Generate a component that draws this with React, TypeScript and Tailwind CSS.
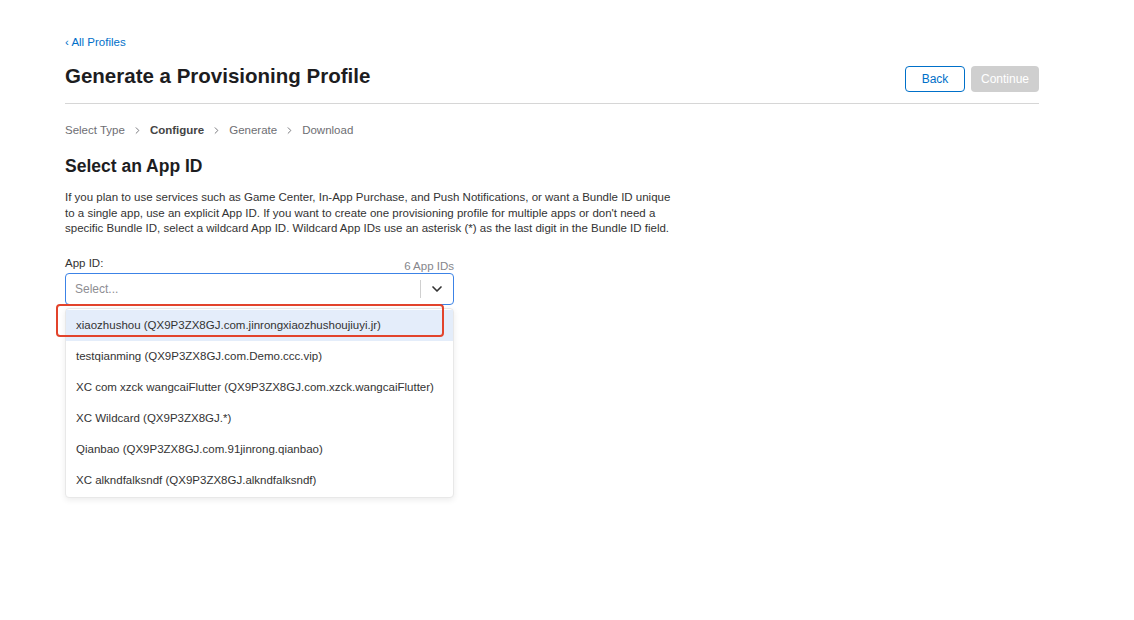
import { ChevronDown, ChevronRight } from "lucide-react";

const appIds = [
  "xiaozhushou (QX9P3ZX8GJ.com.jinrongxiaozhushoujiuyi.jr)",
  "testqianming (QX9P3ZX8GJ.com.Demo.ccc.vip)",
  "XC com xzck wangcaiFlutter (QX9P3ZX8GJ.com.xzck.wangcaiFlutter)",
  "XC Wildcard (QX9P3ZX8GJ.*)",
  "Qianbao (QX9P3ZX8GJ.com.91jinrong.qianbao)",
  "XC alkndfalksndf (QX9P3ZX8GJ.alkndfalksndf)",
];

const steps = ["Select Type", "Configure", "Generate", "Download"];

export default function App() {
  return (
    <div
      className="w-[1134px] h-[620px] overflow-hidden bg-white text-[#1d1d1f]"
      style={{ fontFamily: "'Liberation Sans', Arial, sans-serif" }}
    >
      <div className="w-[974px] ml-[65px]">
        {/* back link */}
        <div className="h-[49px] flex items-end">
          <a href="#" className="text-[11.5px] leading-[13px] text-[#0070c9]">
            ‹ All Profiles
          </a>
        </div>

        {/* header */}
        <div className="flex items-center justify-between h-[55px] border-b border-[#d6d6d6]">
          <h1 className="text-[20.5px] font-bold mt-[1px]">
            Generate a Provisioning Profile
          </h1>
          <div className="flex gap-[6px] mt-[6px]">
            <button className="h-[26px] w-[60px] rounded-[4px] border border-[#0070c9] text-[12px] text-[#0070c9] bg-white">
              Back
            </button>
            <button className="h-[26px] w-[68px] rounded-[4px] bg-[#cfcfcf] text-[12px] text-white">
              Continue
            </button>
          </div>
        </div>

        {/* breadcrumb */}
        <div className="flex items-center mt-[18px] text-[11.5px] text-[#6e6e73]">
          {steps.map((s, i) => (
            <div key={s} className="flex items-center">
              {i > 0 && <ChevronRight className="w-[11px] h-[11px] mx-[7px]" strokeWidth={2} />}
              <span className={i === 1 ? "font-bold text-[#444]" : ""}>{s}</span>
            </div>
          ))}
        </div>

        <h2 className="text-[17.5px] font-bold mt-[15px] leading-[24px]">Select an App ID</h2>

        <p className="text-[11.5px] leading-[15.5px] text-[#333] mt-[12px] whitespace-nowrap">
          If you plan to use services such as Game Center, In-App Purchase, and Push Notifications, or want a Bundle ID unique
          <br />
          to a single app, use an explicit App ID. If you want to create one provisioning profile for multiple apps or don't need a
          <br />
          specific Bundle ID, select a wildcard App ID. Wildcard App IDs use an asterisk (*) as the last digit in the Bundle ID field.
        </p>

        {/* select */}
        <div className="w-[389px] mt-[18px] relative">
          <div className="flex items-end justify-between text-[11.5px]">
            <span className="text-[#333]">App ID:</span>
            <span className="text-[#86868b] mb-[-3px]">6 App IDs</span>
          </div>
          <div className="mt-[1px] h-[32px] rounded-[4px] border border-[#3c83e6] flex items-center">
            <span className="flex-1 pl-[9px] text-[12px] text-[#8e8e93]">Select...</span>
            <div className="w-px h-[18px] bg-[#d0d0d0]" />
            <div className="w-[32px] flex justify-center">
              <ChevronDown className="w-[16px] h-[16px] text-[#333]" strokeWidth={2.5} />
            </div>
          </div>

          <div className="mt-[3px] rounded-[4px] border border-[#e8e8e8] shadow-[0_2px_6px_rgba(0,0,0,0.08)] bg-white py-px">
            {appIds.map((id, i) => (
              <div
                key={id}
                className={`h-[31px] flex items-center pl-[10px] text-[11.5px] text-[#333] whitespace-nowrap ${
                  i === 0 ? "bg-[#e4edfa]" : ""
                }`}
              >
                {id}
              </div>
            ))}
          </div>

          {/* red annotation */}
          <div className="absolute left-[-9px] top-[49px] w-[388px] h-[33px] rounded-[4px] border-2 border-[#e2432b]" />
        </div>
      </div>
    </div>
  );
}
